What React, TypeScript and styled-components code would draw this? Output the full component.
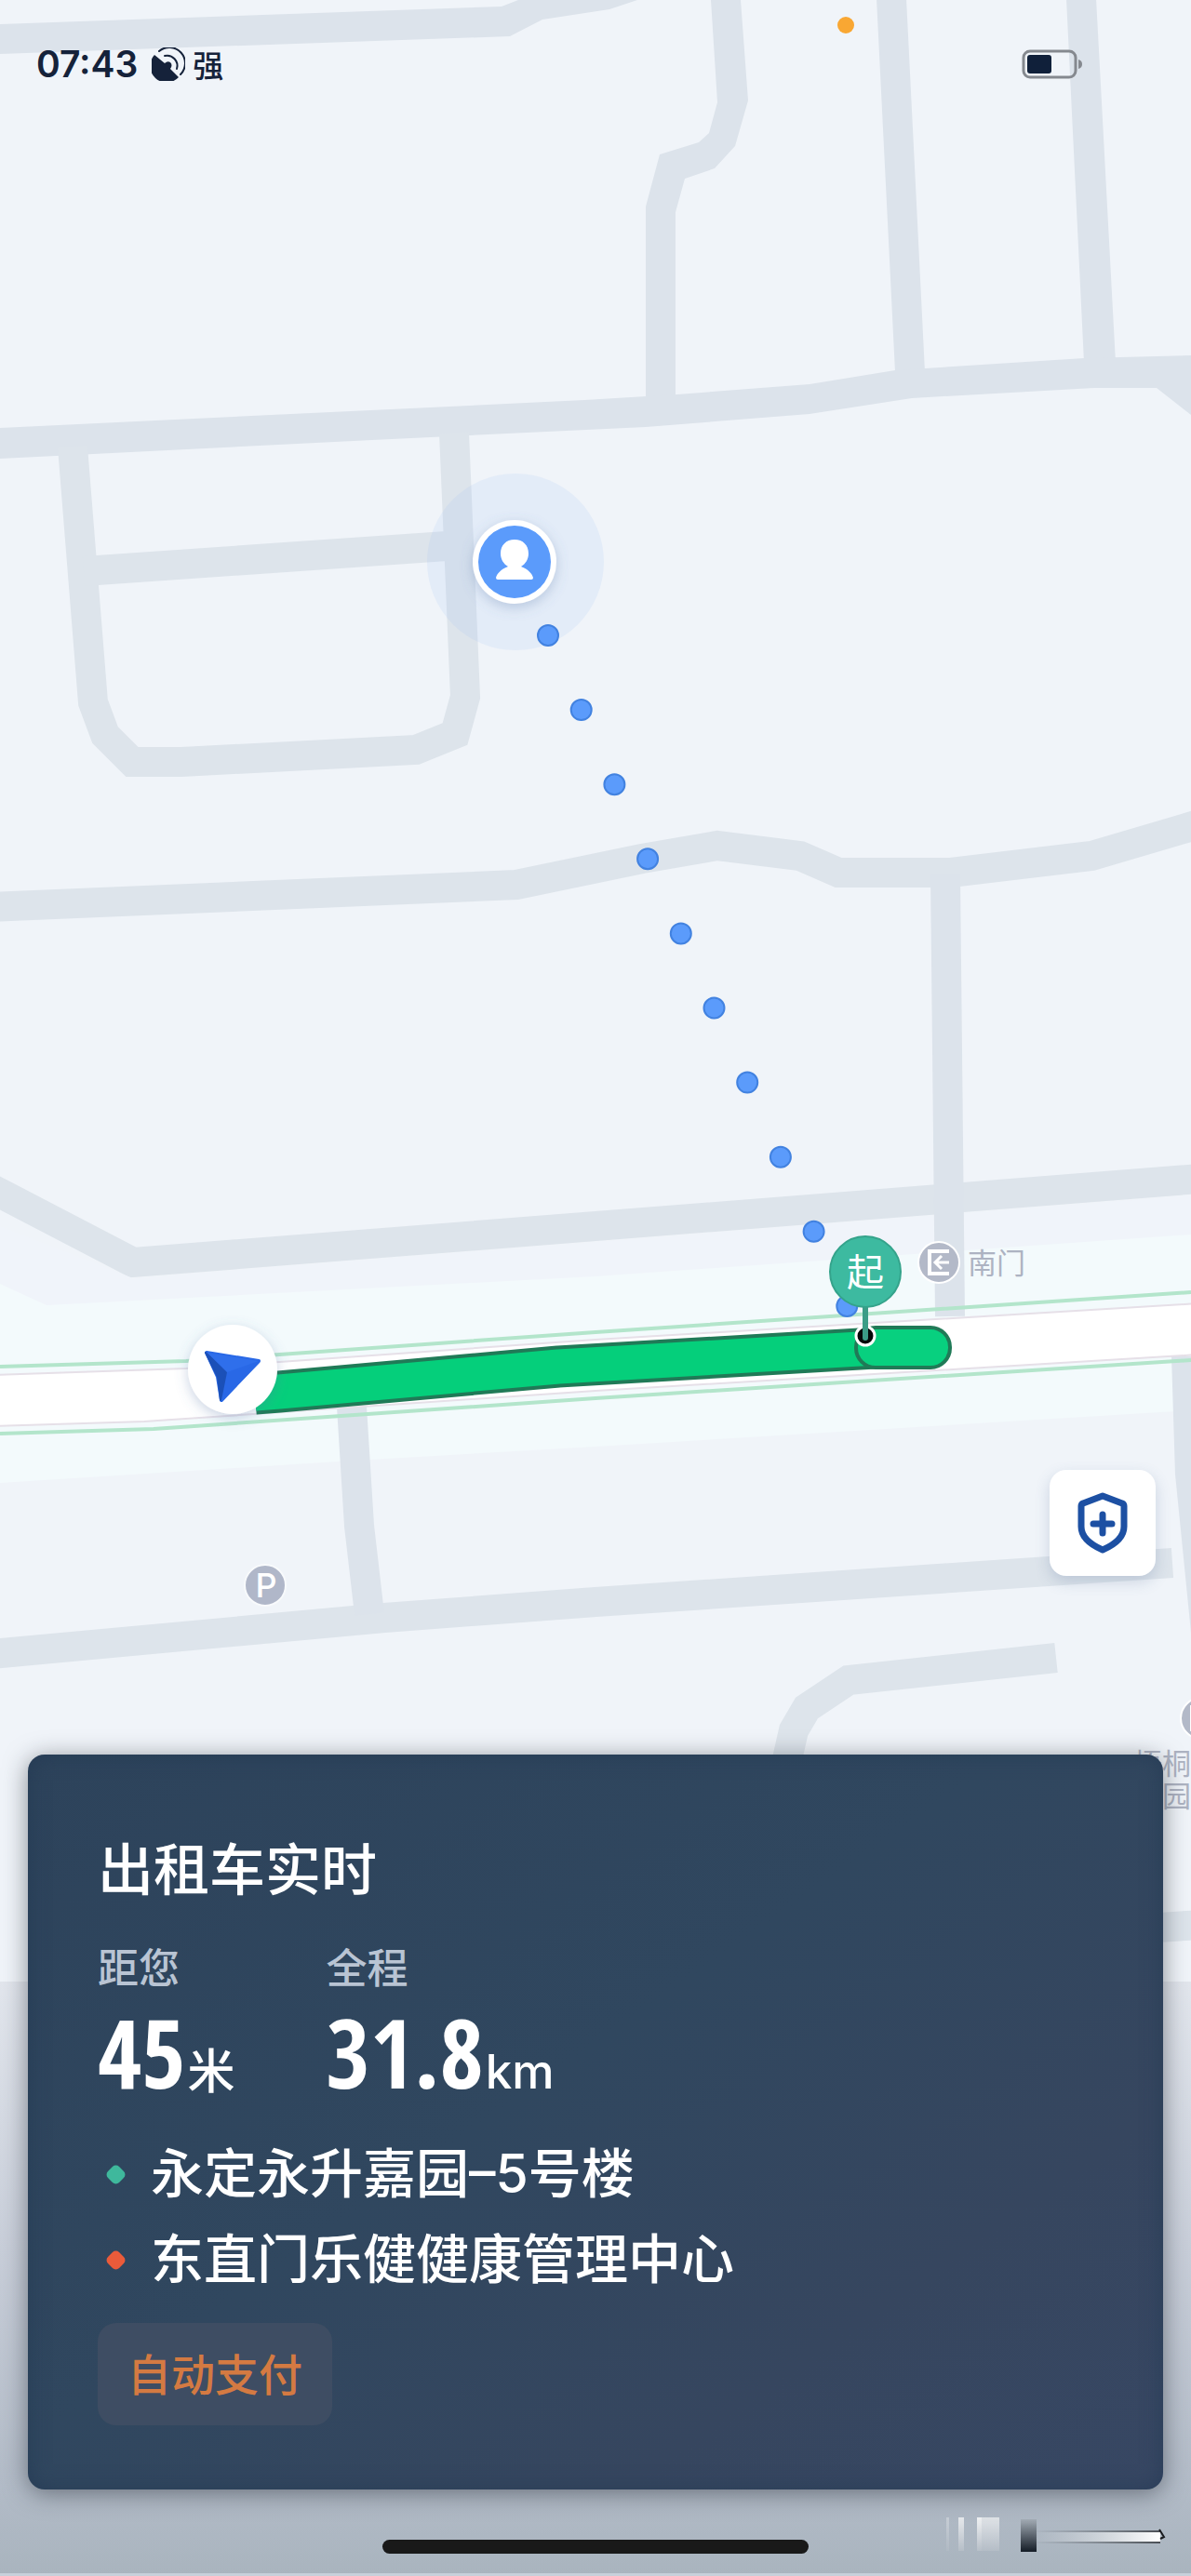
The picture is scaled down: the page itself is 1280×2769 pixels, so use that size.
import React from "react";
import styled, { createGlobalStyle } from "styled-components";

const cjk = `"Noto Sans CJK SC", sans-serif`;

const GlobalStyle = createGlobalStyle`
  * { box-sizing: border-box; }
  body { margin: 0; background: #f0f4f9; font-family: Inter, ${cjk}; }
  h1, p, dl, dt, dd, ul { margin: 0; padding: 0; }
`;

const Screen = styled.main`
  position: relative;
  display: flex;
  flex-direction: column;
  min-height: 100vh;
  padding: 0 30px 24px;
  overflow: hidden;
`;

const MapLayer = styled.svg`
  position: absolute;
  inset: 0;
  width: 100%;
  height: 100%;
  font-family: ${cjk};
`;

const StatusBar = styled.header`
  position: relative;
  display: flex;
  align-items: center;
  justify-content: space-between;
  padding: 45px 86px 0 9px;
  color: #15223a;
`;

const StatusGroup = styled.div`
  display: flex;
  align-items: center;
  gap: 8px;
  height: 48px;
`;

const Clock = styled.time`
  margin-right: 7px;
  font-size: 39px;
  line-height: 48px;
  font-weight: 600;
`;

const Carrier = styled.span`
  font: 500 33px/48px ${cjk};
`;

const SafetyButton = styled.button`
  position: relative;
  display: grid;
  place-items: center;
  align-self: flex-end;
  width: 114px;
  height: 114px;
  margin: auto 8px 192px 0;
  padding: 0;
  border: 0;
  border-radius: 18px;
  background: #fff;
  box-shadow: 0 6px 16px rgba(70, 95, 140, 0.22);
`;

const TripCard = styled.section`
  position: relative;
  padding: 80px 75px 69px;
  border-radius: 18px;
  color: #fff;
  background: linear-gradient(145deg, #2d435b 0%, #30475f 45%, #36465f 75%, #374763 100%);
  box-shadow: 0 4px 26px rgba(30, 35, 45, 0.5), inset 0 0 22px rgba(31, 54, 80, 0.6);
`;

const Title = styled.h1`
  font: 500 60px/80px ${cjk};
`;

const Stats = styled.dl`
  display: flex;
  gap: 98px;
  margin-top: 39px;
`;

const StatLabel = styled.dt`
  font: 500 44px/56px ${cjk};
  color: #b9c4d3;
`;

const StatValue = styled.dd`
  display: flex;
  align-items: baseline;
  height: 160px;
  font: 700 102px/130px "Open Sans Condensed", "Roboto Condensed", sans-serif;
`;

const Unit = styled.span`
  margin-left: 2px;
  font: 500 51px/72px Inter, ${cjk};
`;

const Stops = styled.ul`
  display: flex;
  flex-direction: column;
  gap: 20px;
  list-style: none;
`;

const Stop = styled.li<{ $color: string }>`
  display: flex;
  align-items: center;
  gap: 29px;
  padding-left: 11px;
  font: 500 57px/72px Inter, ${cjk};

  &::before {
    content: "";
    width: 17px;
    height: 17px;
    border-radius: 5px;
    background: ${(p) => p.$color};
    transform: rotate(45deg);
  }
`;

const PayButton = styled.button`
  display: block;
  height: 110px;
  margin-top: 32px;
  padding: 0 32px 4px;
  border: 0;
  border-radius: 20px;
  background: #3e4d63;
  color: #d47a42;
  font: 500 47px/64px ${cjk};
`;

const HomeIndicator = styled.div`
  position: relative;
  align-self: center;
  width: 37.5%;
  height: 15px;
  margin-top: 54px;
  border-radius: 8px;
  background: #191919;
`;

const walkDots = Array.from({ length: 10 }, (_, i) => ({
  x: 589 + i * 35.7,
  y: 683 + i * 80.1,
}));

const streets = [
  "M78 480 L100 755 L113 790 L142 819 L195 819 L447 806 L489 789 L500 749 L488 465",
  "M90 614 L480 587",
  "M-10 975 L555 951 L690 923 L771 909 L860 920 L901 938 L1022 938 L1173 920 L1285 887",
  "M-20 1272 L143 1357 L1290 1267",
  "M-10 1778 L413 1739 L640 1722 L1260 1680",
  "M844 1900 L853 1860 L867 1836 L912 1806 L1135 1782",
  "M1230 2073 L1290 2069",
];

function Roads() {
  return (
    <>
      <g fill="#dce3eb">
        <path d="M0 26 L539 7 L557 0 L685 0 L655 10 L583 21 L548 39 L0 58Z" />
        <path d="M764 0 L771 110 L762 143 L751 153 L709 166 L694 222 L694 428 L726 428 L726 228 L736 192 L768 181 L790 157 L804 108 L796 0Z" />
        <path d="M942 -2 H974 L994 400 H962Z M1146 -2 H1178 L1199 390 H1165Z" />
        <path d="M0 460 L628 430 L728 424 L870 413 L962 398 L1165 385 L1280 382 V446 L1243 417 H1176 L980 428 L870 445 L694 459 L400 473 L0 493Z" />
      </g>
      <g fill="none" stroke="#dde4eb" strokeWidth="32">
        {streets.map((d) => (
          <path key={d} d={d} />
        ))}
      </g>
      <path d="M0 1318 L143 1374 L1280 1285 V1327 L640 1372 L50 1403 L0 1380Z" fill="#f0f4fa" />
      <path d="M0 1380 L50 1403 L640 1372 L1280 1327 V1516 L640 1555 L363 1571 L0 1594Z" fill="#f3fafc" />
      <g fill="none" stroke="#dce3eb" strokeWidth="32">
        <path d="M1016 940 L1021 1415" />
        <path d="M378 1512 L386 1640 L397 1735" />
      </g>
      <path d="M1259 1458 L1263 1585 L1280 1755 V1458Z" fill="#dce3eb" />
      <path d="M-10 1478 L200 1471 L640 1440 L1290 1401 V1456 L640 1495 L155 1528 L-10 1533Z" fill="#fff" stroke="#e6e0e8" strokeWidth="2" />
      <g fill="none" stroke="#b3e5cb" strokeWidth="4">
        <path d="M0 1469 L200 1463 L640 1432 L1280 1389" />
        <path d="M0 1541 L165 1536 L640 1503 L1280 1462" />
      </g>
    </>
  );
}

function Route() {
  return (
    <g fill="none" strokeLinejoin="round">
      <path d="M274 1498 L300 1496 L600 1469 L941 1449" stroke="#207a57" strokeWidth="45" />
      <path d="M274 1498 L300 1496 L600 1469 L941 1449" stroke="#05cf7b" strokeWidth="37" />
      <rect x="920" y="1427" width="101" height="43" rx="21" fill="#08d07f" stroke="#207a57" strokeWidth="4" />
    </g>
  );
}

function EntranceIcon({ x, y }: { x: number; y: number }) {
  return (
    <g transform={`translate(${x} ${y})`} fill="none" stroke="#fff">
      <circle r="22" fill="#b3b9c8" strokeWidth="2" />
      <path d="M11 -12 H-10 V12 H11" strokeWidth="4" />
      <path d="M11 0 H-3 M3 -7 L-4 0 L3 7" strokeWidth="3" />
    </g>
  );
}

function CityMap() {
  return (
    <MapLayer viewBox="0 0 1280 2769" preserveAspectRatio="xMidYMin slice" role="img" aria-label="地图">
      <defs>
        <linearGradient id="fade" x1="0" y1="0" x2="0" y2="1">
          <stop offset="0" stopColor="#e2e6ed" />
          <stop offset="0.45" stopColor="#c8ced9" />
          <stop offset="0.85" stopColor="#b2bbc7" />
          <stop offset="1" stopColor="#a9b4be" />
        </linearGradient>
        <linearGradient id="smear" x1="0" y1="0" x2="0" y2="1">
          <stop offset="0" stopColor="#f4f5f6" />
          <stop offset="1" stopColor="#b8c0c9" />
        </linearGradient>
        <linearGradient id="smearDark" x1="0" y1="0" x2="0" y2="1">
          <stop offset="0" stopColor="#a3acb5" />
          <stop offset="1" stopColor="#141c26" />
        </linearGradient>
        <linearGradient id="streak" x1="0" y1="0" x2="1" y2="0">
          <stop offset="0" stopColor="#d6dade" stopOpacity="0" />
          <stop offset="1" stopColor="#fff" />
        </linearGradient>
        <linearGradient id="streakEdge" x1="0" y1="0" x2="1" y2="0">
          <stop offset="0" stopColor="#6c7279" stopOpacity="0" />
          <stop offset="1" stopColor="#4a4f55" />
        </linearGradient>
        <filter id="soft" x="-50%" y="-50%" width="200%" height="200%">
          <feDropShadow dx="0" dy="4" stdDeviation="7" floodColor="#5a76a8" floodOpacity="0.32" />
        </filter>
      </defs>
      <rect width="1280" height="2769" fill="#f0f4f9" />
      <Roads />
      <Route />

      <circle cx="554" cy="604" r="95" fill="#8db8f5" fillOpacity="0.12" />
      <g fill="#5b9bfb" stroke="#4282e0" strokeWidth="2">
        {walkDots.map((dot) => (
          <circle key={dot.x} cx={dot.x} cy={dot.y} r="11" />
        ))}
      </g>

      <g transform="translate(553 604)">
        <circle r="45" fill="#fff" filter="url(#soft)" />
        <circle r="39" fill="#5b9bfb" />
        <path d="M0 -24 C9 -24 15 -18 15 -9 C15 -3 12 2 7 5 C15 8 19 13 20 17 Q20 19 18 19 H-18 Q-20 19 -20 17 C-19 13 -15 8 -7 5 C-12 2 -15 -3 -15 -9 C-15 -18 -9 -24 0 -24Z" fill="#fff" />
      </g>

      <g transform="translate(250 1472)">
        <circle r="48" fill="#fff" filter="url(#soft)" />
        <g strokeLinejoin="round" strokeWidth="4">
          <path d="M-28 -18 L28 -9 L-12 33 L-16 8Z" fill="#2968e6" stroke="#2968e6" />
          <path d="M-29 -18 L-7 3 L-13 33 L-16 8Z" fill="#1b50b8" stroke="#1b50b8" strokeWidth="2" />
          <path d="M-27 -18 L28 -9 L-6 3Z" fill="#2f6feb" />
        </g>
      </g>

      <circle cx="930" cy="1436" r="10" fill="#050b0a" stroke="#fff" strokeWidth="3" />
      <path d="M930 1402 V1438" stroke="#3b9d87" strokeWidth="6" strokeLinecap="round" />
      <circle cx="930" cy="1367" r="38" fill="#3dbaa0" stroke="#34a38b" strokeWidth="2" />
      <text x="930" y="1382" textAnchor="middle" fontSize="40" fill="#fff">起</text>

      <EntranceIcon x={1009} y={1357} />
      <text x="1040" y="1369" fontSize="31" fill="#adb3c2">南门</text>
      <EntranceIcon x={1291} y={1847} />
      <text fontSize="31" fill="#adb3c2" textAnchor="end">
        <tspan x="1280" y="1907">梧桐</tspan>
        <tspan x="1280" y="1942">园</tspan>
      </text>

      <circle cx="285" cy="1704" r="22" fill="#b0b7c9" stroke="#f8fafc" strokeWidth="2" />
      <text x="286" y="1717" textAnchor="middle" fontSize="36" fontWeight="500" fill="#fff" fontFamily="Inter, sans-serif">P</text>

      <circle cx="909" cy="27" r="9" fill="#f9a733" />

      <rect y="2130" width="1280" height="639" fill="url(#fade)" />
      <g fill="url(#smear)">
        <rect x="1017" y="2706" width="3" height="36" opacity="0.35" />
        <rect x="1030" y="2706" width="6" height="36" opacity="0.8" />
        <rect x="1050" y="2706" width="24" height="36" opacity="0.7" />
        <rect x="1050" y="2706" width="5" height="36" opacity="0.8" />
      </g>
      <rect x="1097" y="2708" width="17" height="35" fill="url(#smearDark)" />
      <rect x="1110" y="2722" width="137" height="10" fill="url(#streak)" />
      <rect x="1110" y="2720" width="137" height="2" fill="url(#streakEdge)" />
      <rect x="1110" y="2732" width="137" height="2" fill="url(#streakEdge)" />
      <path d="M1246 2719 L1251 2727 L1247 2729" fill="none" stroke="#191b1e" strokeWidth="2" />
      <rect y="2766" width="1280" height="3" fill="#c6d0da" />
    </MapLayer>
  );
}

function SignalIcon() {
  return (
    <svg width="36" height="36" viewBox="0 0 36 36" aria-hidden="true">
      <path d="M3 8 L14 17 Q17 14 20 16 Q23 19 20 23 L29 32 A17 17 0 0 1 3 8Z" fill="#15223a" />
      <g fill="none" stroke="#15223a" strokeLinecap="round">
        <path d="M8 4 A17 17 0 0 1 31 29" strokeWidth="2" />
        <path d="M14 9 A11 11 0 0 1 27 23" strokeWidth="2" />
      </g>
    </svg>
  );
}

function BatteryIcon() {
  return (
    <svg width="66" height="32" viewBox="0 0 66 32" role="img" aria-label="电量">
      <rect x="2" y="2" width="56" height="28" rx="7" fill="none" stroke="#85898f" strokeWidth="3" />
      <rect x="6" y="6" width="26" height="20" rx="3" fill="#10203a" />
      <path d="M61 11 Q65 12 65 16 Q65 20 61 21Z" fill="#85898f" />
    </svg>
  );
}

function ShieldIcon() {
  return (
    <svg width="58" height="68" viewBox="0 0 58 68" fill="none" stroke="#1d50a3" strokeWidth="7" strokeLinecap="round" strokeLinejoin="round" aria-hidden="true">
      <path d="M29 5 L50 13 Q52 14 52 16 V38 Q52 53 29 63 Q6 53 6 38 V16 Q6 14 8 13Z" />
      <path d="M29 25 V45 M19 35 H39" />
    </svg>
  );
}

const stats = [
  { label: "距您", value: "45", unit: "米" },
  { label: "全程", value: "31.8", unit: "km" },
];

const stops = [
  { name: "永定永升嘉园–5号楼", color: "#3fb89c" },
  { name: "东直门乐健健康管理中心", color: "#ea5b3a" },
];

export default function App() {
  return (
    <>
      <GlobalStyle />
      <Screen>
        <CityMap />
        <StatusBar>
          <StatusGroup>
            <Clock>07:43</Clock>
            <SignalIcon />
            <Carrier>强</Carrier>
          </StatusGroup>
          <BatteryIcon />
        </StatusBar>
        <SafetyButton type="button" aria-label="安全中心">
          <ShieldIcon />
        </SafetyButton>
        <TripCard>
          <Title>出租车实时</Title>
          <Stats>
            {stats.map((s) => (
              <div key={s.label}>
                <StatLabel>{s.label}</StatLabel>
                <StatValue>
                  {s.value}
                  <Unit>{s.unit}</Unit>
                </StatValue>
              </div>
            ))}
          </Stats>
          <Stops>
            {stops.map((s) => (
              <Stop key={s.name} $color={s.color}>
                {s.name}
              </Stop>
            ))}
          </Stops>
          <PayButton type="button">自动支付</PayButton>
        </TripCard>
        <HomeIndicator />
      </Screen>
    </>
  );
}
